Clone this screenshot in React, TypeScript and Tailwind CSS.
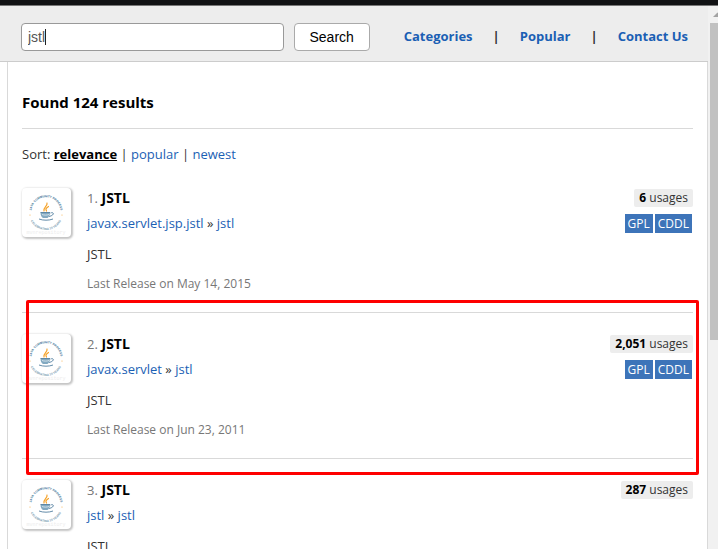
interface Artifact {
  group: string
  name: string
  usages: string
  licenses: string[]
  released: string
  marked?: boolean
}

const artifacts: Artifact[] = [
  { group: 'javax.servlet.jsp.jstl', name: 'jstl', usages: '6', licenses: ['GPL', 'CDDL'], released: 'May 14, 2015' },
  { group: 'javax.servlet', name: 'jstl', usages: '2,051', licenses: ['GPL', 'CDDL'], released: 'Jun 23, 2011', marked: true },
  { group: 'jstl', name: 'jstl', usages: '287', licenses: [], released: 'Jun 21, 2006' },
]

function ProcessLogo({ id }: { id: string }) {
  return (
    <svg viewBox="0 0 49 49" className="h-[49px] w-[49px] shrink-0 rounded-[4px] bg-white shadow-[1px_1px_2px_1px_#c4c4c4]" aria-hidden="true">
      <path id={`top-${id}`} d="M10.500 29 A14.500 14.500 0 1 1 37.500 29" fill="none" />
      <path id={`bottom-${id}`} d="M7 25 A17 17 0 0 0 41 25" fill="none" />
      <g fontFamily="Liberation Sans, sans-serif" fontSize="3" fontWeight="bold">
        <text fill="#376f93" textAnchor="middle"><textPath href={`#top-${id}`} startOffset="50%">JAVA COMMUNITY PROCESS</textPath></text>
        <text fill="#7799ae" textAnchor="middle"><textPath href={`#bottom-${id}`} startOffset="50%">CELEBRATING 10 YEARS</textPath></text>
      </g>
      <circle cx="8" cy="27" r=".6" fill="#f5b04c" />
      <circle cx="40" cy="27" r=".6" fill="#f5b04c" />
      <path d="M25 15c1 3-4 4.500-3 8M26.500 18.500c-3 2-3 2.500-2 4.500" fill="none" stroke="#f5a126" strokeWidth="1.200" strokeLinecap="round" />
      <path d="M18.500 24.500h9.500c0 3-1.500 5-2.500 5.500h-4.500c-1.500-.8-2.500-2.500-2.500-5.500z" fill="#82a9c1" />
      <path d="M18.500 24.500h9.500M28.500 25c4-1.500 4 2.500-1.500 3.500M17 31c4 1.600 10 1.600 14 0" fill="none" stroke="#527f9f" strokeWidth=".9" />
      <path d="M20 26.500c2 .8 5 .8 7 0" fill="none" stroke="#f4f8fb" strokeWidth=".7" />
      <text x="24" y="46" textAnchor="middle" fill="#ececec" fontSize="5" fontFamily="Liberation Mono, monospace">mvnrepository</text>
    </svg>
  )
}

function ArtifactRow({ item, index }: { item: Artifact; index: number }) {
  return (
    <li className="relative flex border-b border-[#d9d9d9] pt-[21px] pb-[18px]">
      <ProcessLogo id={String(index)} />
      <div className="ml-4 min-w-0 flex-1 leading-5">
        <h2 className="text-[14px] leading-5 font-bold text-black">
          <span className="text-[13px] font-normal text-[#777]">{index}.</span> JSTL
        </h2>
        <p className="mt-[5px]">
          <a href="#" className="text-[#1b5fb4]">{item.group}</a> » <a href="#" className="text-[#1b5fb4]">{item.name}</a>
        </p>
        <p className="mt-[11px]">JSTL</p>
        <p className="mt-[10px] text-[12px] text-[#777]">Last Release on {item.released}</p>
      </div>
      <div className="flex flex-col items-end pt-px text-[12px]">
        <a href="#" className="rounded-[2px] bg-[#ededed] px-[5px] leading-[18px]">
          <b className="text-black">{item.usages}</b> usages
        </a>
        <div className="mt-[7px] mr-px flex gap-[2px] leading-[19px] text-white">
          {item.licenses.map((license) => (
            <span key={license} className="bg-[#3d74b9] px-[3px]">{license}</span>
          ))}
        </div>
      </div>
      {item.marked && (
        <div className="pointer-events-none absolute -top-[13px] -right-[6px] -bottom-[17px] left-1 rounded-[2px] border-3 border-[#fe0000]" />
      )}
    </li>
  )
}

export default function App() {
  return (
    <div className="flex h-screen flex-col overflow-hidden bg-white font-['Open_Sans','Noto_Sans',sans-serif] text-[13px] text-[#333]">
      <div className="h-[6px] shrink-0 border-b border-[#777] bg-[#111214]" />
      <div className="flex min-h-0 flex-1">
        <div className="flex min-w-0 flex-1 flex-col overflow-hidden">
          <header className="flex shrink-0 items-center border-b border-[#ccc] bg-[#ededed] pt-[17px] pr-5 pb-[10px] pl-[21px]">
            <form className="flex flex-1 gap-[10px] font-['Liberation_Sans',Arial,sans-serif]" onSubmit={(e) => e.preventDefault()}>
              <div className="relative min-w-0 flex-1">
                <input
                  aria-label="Search artifacts"
                  defaultValue="jstl"
                  className="h-7 w-full rounded-[4px] border border-[#999] bg-white px-[6px] text-[14px] text-[#555] outline-none"
                />
                <span className="absolute top-[6px] left-6 h-4 w-px bg-[#222]" />
              </div>
              <button className="h-7 w-[76px] rounded-[4px] border border-[#aaa] bg-white text-[14px] text-black">Search</button>
            </form>
            <nav className="ml-[34px] flex gap-5 font-bold">
              <a href="#" className="text-[#1b5fb4]">Categories</a>
              <span>|</span>
              <a href="#" className="text-[#1b5fb4]">Popular</a>
              <span>|</span>
              <a href="#" className="text-[#1b5fb4]">Contact Us</a>
            </nav>
          </header>
          <main className="ml-[7px] flex-1 border-x border-[#d9d9d9] px-[14px]">
            <h1 className="border-b border-[#d9d9d9] pt-[30px] pb-4 text-[15px] leading-5 font-bold text-black">Found 124 results</h1>
            <p className="pt-[15px] pb-[3px] leading-5">
              Sort: <a href="#" className="font-bold text-black underline">relevance</a> | <a href="#" className="text-[#1b5fb4]">popular</a> | <a href="#" className="text-[#1b5fb4]">newest</a>
            </p>
            <ol>
              {artifacts.map((item, i) => (
                <ArtifactRow key={item.group} item={item} index={i + 1} />
              ))}
            </ol>
          </main>
        </div>
        <div className="w-[10px] shrink-0 overflow-hidden bg-[#f1f1f1] pl-[2px]">
          <svg viewBox="0 0 17 17" className="h-[17px] w-[17px] max-w-none" aria-hidden="true">
            <path d="M3 11l4.500-4.500 4.500 4.500z" fill="#a3a3a3" />
          </svg>
          <div className="h-[317px] bg-[#c1c1c1]" />
        </div>
      </div>
    </div>
  )
}
